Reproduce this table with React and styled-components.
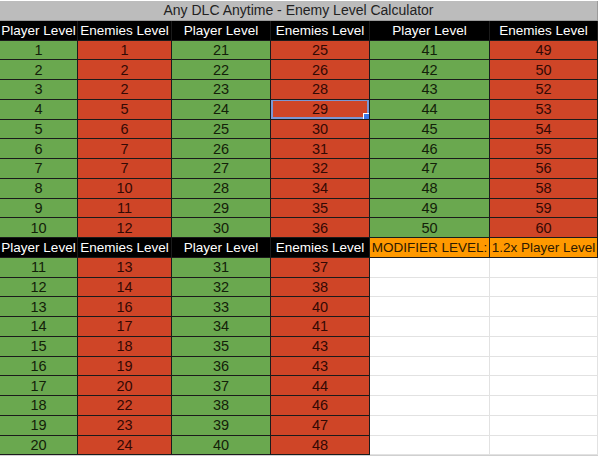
import styled, { createGlobalStyle } from "styled-components";

const GlobalStyle = createGlobalStyle`
  html, body {
    margin: 0;
    padding: 0;
    background: #ffffff;
  }
  body {
    font-family: "Liberation Sans", Arial, sans-serif;
  }
`;

const palette = {
  title: { bg: "#bcbcbc", color: "#222222" },
  head: { bg: "#000000", color: "#ffffff" },
  player: { bg: "#6aa84f", color: "#132109" },
  enemy: { bg: "#cf4527", color: "#330904" },
  modifier: { bg: "#ff9900", color: "#2e1a00" },
  empty: { bg: "#ffffff", color: "#000000" },
};

// enemy level for player levels 1..50, as entered in the sheet
const ENEMY = [
  1, 2, 2, 5, 6, 7, 7, 10, 11, 12,
  13, 14, 16, 17, 18, 19, 20, 22, 23, 24,
  25, 26, 28, 29, 30, 31, 32, 34, 35, 36,
  37, 38, 40, 41, 43, 43, 44, 46, 47, 48,
  49, 50, 52, 53, 54, 55, 56, 58, 59, 60,
];

const Sheet = styled.div`
  display: grid;
  grid-template-columns: 78px 94px 99px 99px 120px 108px;
  grid-auto-rows: 19.75px;
  width: 598px;
  padding-top: 1px;
  border-bottom: 1px solid #d0d0d0;
`;

const Cell = styled.div`
  position: relative;
  display: flex;
  align-items: center;
  justify-content: center;
  box-sizing: border-box;
  font-size: ${(p) => (p.$kind === "player" || p.$kind === "enemy" ? "14.5px" : "13.5px")};
  white-space: nowrap;
  overflow: hidden;
  background: ${(p) => palette[p.$kind].bg};
  color: ${(p) => palette[p.$kind].color};
  border-right: 1px solid ${(p) => (p.$kind === "empty" ? "#e2e2e2" : "#1b1b1b")};
  border-bottom: 1px solid ${(p) => (p.$kind === "empty" ? "#e2e2e2" : "#1b1b1b")};
  grid-column: ${(p) => (p.$span ? `span ${p.$span}` : "auto")};
  ${(p) => p.$kind === "title" && "border-color: #9a9a9a; font-size: 14px;"}
`;

const Selected = styled.span`
  position: absolute;
  inset: -1px 0 0 0;
  border: 2px solid #7b97d4;
  pointer-events: none;

  &::after {
    content: "";
    position: absolute;
    right: -3px;
    bottom: -3px;
    width: 5px;
    height: 5px;
    background: #3b78e7;
    border: 1px solid #ffffff;
  }
`;

const range = (from, n) => Array.from({ length: n }, (_, i) => from + i);

const pair = (p) => [
  <Cell key={`p${p}`} $kind="player">{p}</Cell>,
  <Cell key={`e${p}`} $kind="enemy">
    {ENEMY[p - 1]}
    {p === 24 && <Selected />}
  </Cell>,
];

const heads = (n, tag) =>
  range(0, n).flatMap((i) => [
    <Cell key={`${tag}p${i}`} $kind="head">Player Level</Cell>,
    <Cell key={`${tag}e${i}`} $kind="head">Enemies Level</Cell>,
  ]);

export default function App() {
  const cells = [
    <Cell key="title" $kind="title" $span={6}>Any DLC Anytime - Enemy Level Calculator</Cell>,
    ...heads(3, "a"),
  ];

  range(1, 10).forEach((lvl) => {
    cells.push(...pair(lvl), ...pair(lvl + 20), ...pair(lvl + 40));
  });

  cells.push(
    ...heads(2, "b"),
    <Cell key="mod1" $kind="modifier">MODIFIER LEVEL:</Cell>,
    <Cell key="mod2" $kind="modifier">1.2x Player Level</Cell>
  );

  range(11, 10).forEach((lvl) => {
    cells.push(
      ...pair(lvl),
      ...pair(lvl + 20),
      <Cell key={`x${lvl}a`} $kind="empty" />,
      <Cell key={`x${lvl}b`} $kind="empty" />
    );
  });

  return (
    <>
      <GlobalStyle />
      <Sheet>{cells}</Sheet>
    </>
  );
}
